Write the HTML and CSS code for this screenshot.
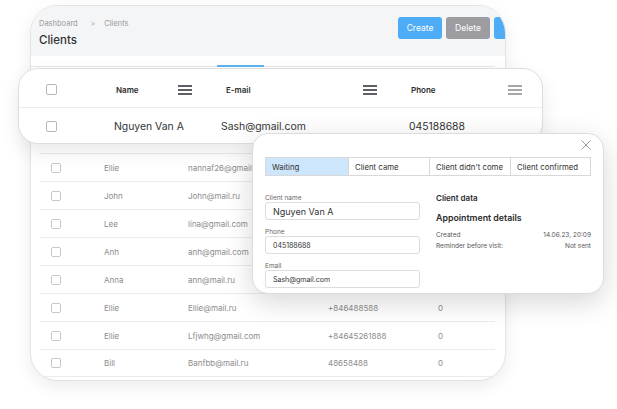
FILE: index.html
```html
<!DOCTYPE html>
<html lang="en">
<head>
<meta charset="utf-8">
<title>Clients</title>
<link rel="stylesheet" href="styles.css">
</head>
<body>
<div class="stage">
  <section class="bg-card">
    <header class="bg-head">
      <div class="titles">
        <div class="crumbs"><span>Dashboard</span><span class="sep">&gt;</span><span>Clients</span></div>
        <h1 class="title">Clients</h1>
      </div>
      <div class="actions">
        <button class="btn btn-blue">Create</button>
        <button class="btn btn-gray">Delete</button>
        <button class="btn btn-blue" aria-label="Export"></button>
      </div>
    </header>
    <div class="tabs-line"><span class="tab-active"></span></div>
    <div class="bg-table">
      <div class="bg-row"><span class="cb"></span><span>Ellie</span><span>nannaf26@gmail.com</span><span></span><span></span></div>
      <div class="bg-row"><span class="cb"></span><span>John</span><span>John@mail.ru</span><span></span><span></span></div>
      <div class="bg-row"><span class="cb"></span><span>Lee</span><span>lina@gmail.com</span><span></span><span></span></div>
      <div class="bg-row"><span class="cb"></span><span>Anh</span><span>anh@gmail.com</span><span></span><span></span></div>
      <div class="bg-row"><span class="cb"></span><span>Anna</span><span>ann@mail.ru</span><span></span><span></span></div>
      <div class="bg-row"><span class="cb"></span><span>Ellie</span><span>Ellie@mail.ru</span><span>+846488588</span><span>0</span></div>
      <div class="bg-row"><span class="cb"></span><span>Ellie</span><span>Lfjwhg@gmail.com</span><span>+84645261888</span><span>0</span></div>
      <div class="bg-row"><span class="cb"></span><span>Bill</span><span>Banfbb@mail.ru</span><span>48658488</span><span>0</span></div>
    </div>
  </section>

  <section class="front-card">
    <div class="fc-head">
      <div class="fc-cell"><span class="cb cb-lg"></span></div>
      <div class="fc-col"><span>Name</span>
        <svg class="menu" viewBox="0 0 14 10" width="14" height="10"><path d="M0 1h14M0 5h14M0 9h14"/></svg></div>
      <div class="fc-col"><span>E-mail</span>
        <svg class="menu" viewBox="0 0 14 10" width="14" height="10"><path d="M0 1h14M0 5h14M0 9h14"/></svg></div>
      <div class="fc-col fc-col-last"><span>Phone</span>
        <svg class="menu menu-gray" viewBox="0 0 14 10" width="14" height="10"><path d="M0 1h14M0 5h14M0 9h14"/></svg></div>
    </div>
    <div class="fc-row">
      <div class="fc-cell"><span class="cb cb-lg"></span></div>
      <span>Nguyen Van A</span>
      <span>Sash@gmail.com</span>
      <span>045188688</span>
    </div>
  </section>

  <section class="modal">
    <svg class="close" viewBox="0 0 10 10" width="10" height="10"><path d="M0.5 0.5l9 9M9.5 0.5l-9 9"/></svg>
    <div class="status-tabs">
      <div class="st st-active">Waiting</div>
      <div class="st">Client came</div>
      <div class="st">Client didn't come</div>
      <div class="st">Client confirmed</div>
    </div>
    <div class="modal-body">
      <div class="form">
        <div class="field"><label>Client name</label><div class="input input-lg">Nguyen Van A</div></div>
        <div class="field"><label>Phone</label><div class="input">045188688</div></div>
        <div class="field"><label>Email</label><div class="input">Sash@gmail.com</div></div>
      </div>
      <div class="info">
        <div class="info-h1">Client data</div>
        <div class="info-h2">Appointment details</div>
        <div class="info-row"><span>Created</span><span>14.06.23, 20:09</span></div>
        <div class="info-row"><span>Reminder before visit:</span><span>Not sent</span></div>
      </div>
    </div>
  </section>
</div>
</body>
</html>
```

FILE: styles.css
```css
* { box-sizing: border-box; }
html, body { margin: 0; padding: 0; background: #ffffff; }
body { font-family: Inter, "Noto Sans", "Liberation Sans", sans-serif; color: #333; }

.stage {
  position: relative;
  width: 617px;
  height: 409px;
  padding: 5px 0 0 30px;
  overflow: hidden;
}

/* background card */
.bg-card {
  width: 476px;
  height: 376px;
  border: 1px solid #e3e3e3;
  border-radius: 28px;
  overflow: hidden;
  background: #fff;
  box-shadow: 0 6px 18px rgba(0,0,0,0.08);
}
.bg-head {
  display: flex;
  height: 50px;
  background: #f4f5f6;
  padding-left: 8px;
}
.titles { width: 359px; flex: none; padding-top: 13px; }
.crumbs { font-size: 7.5px; line-height: 10px; color: #9a9a9a; display: flex; }
.crumbs .sep { margin: 0 9px 0 13px; font-size: 7px; }
.title { margin: 4px 0 0; font-size: 11.5px; line-height: 14px; font-weight: 500; color: #333; }
.actions { display: flex; gap: 4px; flex: none; padding-top: 11px; }
.btn {
  border: 0;
  height: 22px;
  width: 44px;
  border-radius: 3px;
  color: #fff;
  font-family: inherit;
  font-size: 8.5px;
  padding: 0;
}
.btn-blue { background: #4eabf6; }
.btn-gray { background: #9c9ca1; }

.tabs-line {
  position: relative;
  margin: 10px 10px 0 0;
  height: 1px;
  background: #e6e6e6;
}
.tab-active {
  position: absolute;
  left: 186px;
  top: -1px;
  width: 47px;
  height: 2px;
  background: #5db3f0;
}

.bg-table { margin: 86px 10px 0 9px; }
.bg-row {
  display: grid;
  grid-template-columns: 64px 84px 140px 110px 1fr;
  align-items: center;
  height: 28px;
  border-top: 1px solid #ececec;
  font-size: 8px;
  color: #8c8c8c;
}
.bg-row:last-child { border-bottom: 1px solid #ececec; }
.cb {
  display: block;
  width: 10px;
  height: 10px;
  border: 1px solid #c9c9c9;
  border-radius: 2px;
  margin-left: 11px;
}

/* front card */
.front-card {
  position: absolute;
  left: 18px;
  top: 68px;
  width: 525px;
  height: 76px;
  background: #fff;
  border: 1px solid #dedede;
  border-radius: 20px;
  box-shadow: 0 8px 20px rgba(0,0,0,0.09);
}
.fc-head {
  display: grid;
  grid-template-columns: 97px 110px 185px 1fr;
  align-items: center;
  height: 39px;
  padding-top: 3px;
  border-bottom: 1px solid #ececec;
  font-size: 8px;
  font-weight: 600;
  color: #2b2b2b;
}
.fc-col {
  display: flex;
  align-items: center;
  justify-content: space-between;
  padding-right: 34px;
}
.fc-col-last { padding-right: 20px; }
.cb-lg {
  width: 11px;
  height: 11px;
  border-color: #b8b8b8;
  margin-left: 27px;
}
.menu { stroke: #2a2a35; stroke-width: 1.3; fill: none; }
.menu-gray { stroke: #8a8a8a; stroke-width: 1.6; }
.fc-row {
  display: grid;
  grid-template-columns: 95px 107px 188px 1fr;
  align-items: center;
  height: 35px;
  padding-top: 2px;
  font-size: 10.4px;
  color: #333;
}

/* modal */
.modal {
  position: absolute;
  left: 252px;
  top: 133px;
  width: 352px;
  height: 161px;
  background: #fff;
  border: 1px solid #dcdcdc;
  border-radius: 16px;
  padding: 23px 12px 0 12px;
  box-shadow: 0 8px 28px rgba(0,0,0,0.16);
}
.close {
  position: absolute;
  top: 6px;
  right: 12px;
  stroke: #9d9d9d;
  stroke-width: 1;
  fill: none;
}
.status-tabs {
  display: grid;
  grid-template-columns: 82px 81px 81px 82px;
  height: 19px;
  border: 1px solid #d8d8d8;
  font-size: 7.8px;
  color: #333;
}
.st {
  display: flex;
  align-items: center;
  padding-left: 6px;
  border-left: 1px solid #d8d8d8;
}
.st:first-child { border-left: 0; }
.st-active { background: #cee6fb; }

.modal-body {
  display: grid;
  grid-template-columns: 155px 155px;
  gap: 16px;
  margin-top: 18px;
}
.field { margin-bottom: 8px; }
.field label {
  display: block;
  font-size: 6.5px;
  line-height: 8px;
  color: #666;
}
.input {
  height: 18px;
  border: 1px solid #dcdcdc;
  border-radius: 3px;
  padding-left: 7px;
  display: flex;
  align-items: center;
  font-size: 7px;
  color: #333;
}
.input-lg { font-size: 9px; }

.info-h1 { font-size: 8px; font-weight: 600; line-height: 10px; margin-top: -1px; color: #2b2b2b; }
.info-h2 { font-size: 8.8px; font-weight: 600; line-height: 10px; margin-top: 10px; color: #2b2b2b; }
.info-row {
  display: flex;
  justify-content: space-between;
  font-size: 6.5px;
  line-height: 10px;
  color: #555;
}
.info-h2 + .info-row { margin-top: 7px; }
.info-row + .info-row { margin-top: 1px; }
```
